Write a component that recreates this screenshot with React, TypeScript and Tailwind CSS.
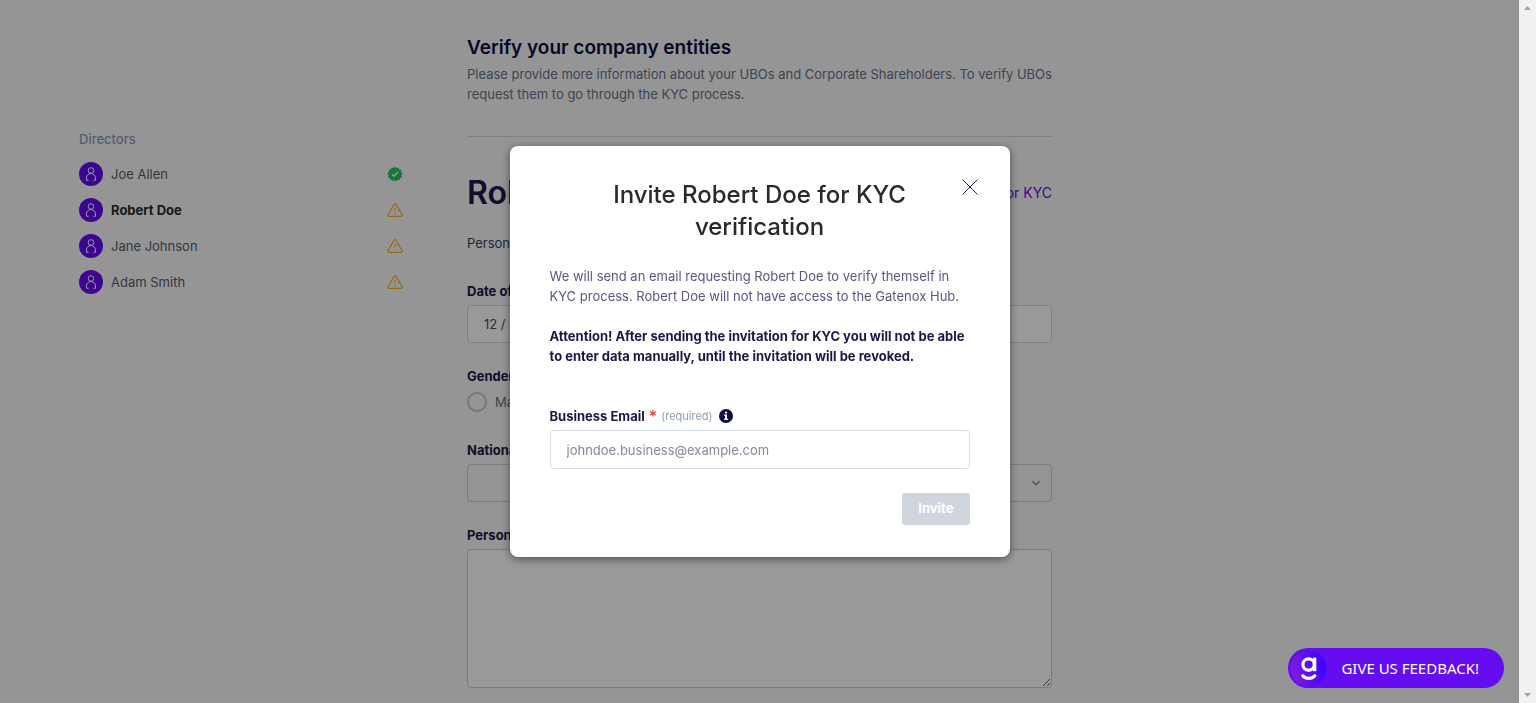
import type { ReactNode } from "react";

type Status = "verified" | "warning";

const directors: { name: string; status: Status; active?: boolean }[] = [
  { name: "Joe Allen", status: "verified" },
  { name: "Robert Doe", status: "warning", active: true },
  { name: "Jane Johnson", status: "warning" },
  { name: "Adam Smith", status: "warning" },
];

function PersonIcon() {
  return (
    <svg width="16" height="16" viewBox="0 0 16 16" fill="none" stroke="#fff" strokeWidth="1" aria-hidden="true">
      <circle cx="8" cy="4.5" r="2.8" />
      <path d="M5.6 14.3H3.5v-2.3a4.500 4.500 0 0 1 9 0v2.300h-2.100" />
    </svg>
  );
}

function VerifiedIcon() {
  return (
    <svg width="16" height="16" viewBox="0 0 16 16" role="img" aria-label="Verified">
      <path
        fill="#22c55e"
        d="M8 .8l1.5 1.3 1.9-.6.8 1.9 2 .4-.1 2.1 1.5 1.4-1.1 1.7.6 1.9-1.8.9-.4 2-2-.1L9.500 15.200 8 14.200l-1.600 1-1.400-1.500-2 .1-.4-2-1.800-.9.600-1.900L.4 7.300l1.500-1.400-.1-2.100 2-.4.800-1.900 1.900.6z"
      />
      <path d="M5 8.200l2 2 4-4.200" fill="none" stroke="#fff" strokeWidth="1.500" />
    </svg>
  );
}

function WarningIcon() {
  return (
    <svg width="16" height="16" viewBox="0 0 16 16" fill="none" stroke="#fdb022" role="img" aria-label="Action needed">
      <path strokeWidth="1.200" strokeLinejoin="round" d="M7.100 2.100L1 12.700a1 1 0 0 0 .9 1.600h12.200a1 1 0 0 0 .9-1.600L8.900 2.100a1 1 0 0 0-1.800 0z" />
      <path strokeWidth="1.100" d="M8 5.500v4M8 11v1.300" />
    </svg>
  );
}

function Label({ htmlFor, children }: { htmlFor?: string; children: ReactNode }) {
  return (
    <label htmlFor={htmlFor} className="block text-[13px] leading-5 font-bold text-[#1b1848]">
      {children}
    </label>
  );
}

function Sidebar() {
  return (
    <nav aria-label="Directors" className="pt-[129px]">
      <h2 className="text-[13px] leading-5 font-medium text-[#8f9bb8]">Directors</h2>
      <ul className="mt-[13px] flex flex-col gap-3">
        {directors.map((d) => (
          <li key={d.name} className="flex items-center gap-2">
            <span className="grid size-6 place-items-center rounded-full bg-[#650df0]">
              <PersonIcon />
            </span>
            <a href="#" className={d.active ? "flex-1 text-[13px] leading-5 font-bold text-[#2a2a2e]" : "flex-1 text-[13px] leading-5 text-[#5a5a66]"}>
              {d.name}
            </a>
            {d.status === "verified" ? <VerifiedIcon /> : <WarningIcon />}
          </li>
        ))}
      </ul>
    </nav>
  );
}

function EntityForm() {
  return (
    <main className="pt-8">
      <h1 className="text-[19px] leading-8 font-semibold">Verify your company entities</h1>
      <p className="text-[13px] leading-5 text-[#6b7188]">
        Please provide more information about your UBOs and Corporate Shareholders. To verify UBOs request them to go
        through the KYC process.
      </p>
      <hr className="mt-8 border-[#d3d6e0]" />
      <div className="mt-9 flex items-center justify-between">
        <h2 className="text-[32px] leading-10 font-semibold text-[#1b1848]">Robert Doe</h2>
        <a href="#" className="text-sm leading-5 text-[#650df0]">
          Invite for KYC
        </a>
      </div>
      <p className="mt-5 text-[13px] leading-5 text-[#3b3960]">Personal information</p>
      <form className="mt-7">
        <Label htmlFor="dob">Date of birth</Label>
        <input
          id="dob"
          defaultValue="12 / 04 / 1985"
          className="mt-1 block h-[38px] w-full rounded border border-[#d3d6e0] bg-white px-4 text-[13px] text-[#4a4a55]"
        />
        <fieldset className="mt-[23px]">
          <legend className="text-[13px] leading-5 font-bold text-[#1b1848]">Gender</legend>
          <div className="mt-1.5 flex items-center gap-6 text-[13px] leading-5 text-[#6b7188]">
            {["Male", "Female"].map((g) => (
              <label key={g} className="flex items-center gap-2">
                <input type="radio" name="gender" className="size-5 appearance-none rounded-full border-2 border-[#c3c7d4]" />
                {g}
              </label>
            ))}
          </div>
        </fieldset>
        <div className="mt-7">
          <Label htmlFor="nationality">Nationality</Label>
          <div className="relative mt-1">
            <select id="nationality" className="block h-[38px] w-full appearance-none rounded border border-[#c9cddc] bg-transparent px-4 text-[13px]">
              <option></option>
            </select>
            <svg className="pointer-events-none absolute top-3.5 right-[11px]" width="10" height="10" viewBox="0 0 10 10" fill="none" stroke="#7c84a6" strokeWidth="1.500" aria-hidden="true">
              <path d="M1.500 3.200L5 6.700l3.500-3.500" />
            </svg>
          </div>
        </div>
        <div className="mt-[23px]">
          <Label htmlFor="address">Personal address</Label>
          <textarea id="address" className="mt-1 block h-[139px] w-full rounded border border-[#c9cddc] bg-white" />
        </div>
      </form>
    </main>
  );
}

function InviteDialog() {
  return (
    <section
      role="dialog"
      aria-modal="true"
      aria-labelledby="invite-title"
      className="relative w-[500px] rounded-lg bg-white px-10 pt-[33px] pb-8 shadow-[0_2px_8px_rgba(0,0,0,0.5)]"
    >
      <button type="button" aria-label="Close" className="absolute top-[33px] right-8 grid size-4 place-items-center">
        <svg width="16" height="16" viewBox="0 0 16 16" stroke="#2b2857" strokeWidth="1" aria-hidden="true">
          <path d="M.5.5l15 15M15.500.5l-15 15" />
        </svg>
      </button>
      <h2 id="invite-title" className="px-12 text-center text-2xl leading-8 font-medium text-[#2a2a2e]">
        Invite Robert Doe for KYC verification
      </h2>
      <p className="mt-[23px] text-[13px] leading-5 text-[#5a5780]">
        We will send an email requesting Robert Doe to verify themself in KYC process. Robert Doe will not have access to
        the Gatenox Hub.
      </p>
      <p className="mt-5 text-[13px] leading-5 font-bold text-[#1b1848]">
        Attention! After sending the invitation for KYC you will not be able to enter data manually, until the invitation
        will be revoked.
      </p>
      <form className="mt-10">
        <div className="flex items-center gap-1.5">
          <label htmlFor="email" className="flex items-center gap-1 text-[13px] leading-5 font-bold text-[#1b1848]">
            Business Email
            <span className="text-base leading-5 font-medium text-[#e5343d]">*</span>
            <span className="text-[11px] leading-5 font-normal text-[#8f9bb8]">(required)</span>
          </label>
          <svg width="14" height="14" viewBox="0 0 14 14" role="img" aria-label="Information">
            <circle cx="7" cy="7" r="7" fill="#100c40" />
            <path fill="#fff" d="M6 2.700h2v1.800H6zM5.200 5.600H8v4h.9V11H5.200V9.600h.9V7h-.9z" />
          </svg>
        </div>
        <input
          id="email"
          type="email"
          placeholder="johndoe.business@example.com"
          className="mt-1 block h-[39px] w-full rounded border border-[#d3dbe4] bg-white px-4 text-[13px] placeholder:text-[#8a8799]"
        />
        <div className="mt-6 flex justify-end">
          <button type="button" disabled className="h-8 rounded-[3px] bg-[#d1d5e0] px-4 text-[13px] font-bold text-white">
            Invite
          </button>
        </div>
      </form>
    </section>
  );
}

function FeedbackButton() {
  return (
    <button
      type="button"
      className="fixed right-8 bottom-[15px] flex h-10 items-center rounded-full bg-[#650df0] pr-[25px] pl-0.5 font-['Noto_Sans',sans-serif] text-[15px] text-white"
    >
      <svg width="37" height="37" viewBox="0 0 37 37" aria-hidden="true">
        <defs>
          <linearGradient id="disc" x1="0" y1="0.6" x2="1" y2="0.400">
            <stop offset="0.1" stopColor="#7a1be0" />
            <stop offset="1" stopColor="#3a00ff" />
          </linearGradient>
        </defs>
        <circle cx="18.500" cy="18.500" r="18" fill="url(#disc)" />
        <g fill="none" stroke="#fff" strokeWidth="3.200">
          <circle cx="18.600" cy="14.600" r="5.700" />
          <path d="M24.700 7.600v13.600" />
          <path strokeLinecap="round" d="M12.800 25.800c3.200 3.400 8.800 3.400 12 0" />
        </g>
      </svg>
      <span className="ml-3.5">GIVE US FEEDBACK!</span>
    </button>
  );
}

function ScrollTrack() {
  return (
    <div aria-hidden="true" className="fixed inset-y-0 right-0 flex w-[17px] flex-col items-center justify-between bg-[#f1f1f1] py-1.5">
      <svg width="7" height="4" viewBox="0 0 7 4" fill="#a3a3a3">
        <path d="M0 4L3.500 0 7 4z" />
      </svg>
      <svg width="7" height="4" viewBox="0 0 7 4" fill="#a3a3a3">
        <path d="M0 0L3.500 4 7 0z" />
      </svg>
    </div>
  );
}

export default function App() {
  return (
    <div className="h-screen overflow-hidden bg-[#f8f8fb] pr-[17px] font-['Inter',sans-serif] text-[#100c40]">
      <div className="grid grid-cols-[minmax(0,1fr)_585px_minmax(0,1fr)] gap-16 px-[79px]">
        <Sidebar />
        <EntityForm />
      </div>
      <div className="fixed inset-y-0 right-[17px] left-0 flex items-center justify-center bg-black/40">
        <InviteDialog />
      </div>
      <FeedbackButton />
      <ScrollTrack />
    </div>
  );
}
